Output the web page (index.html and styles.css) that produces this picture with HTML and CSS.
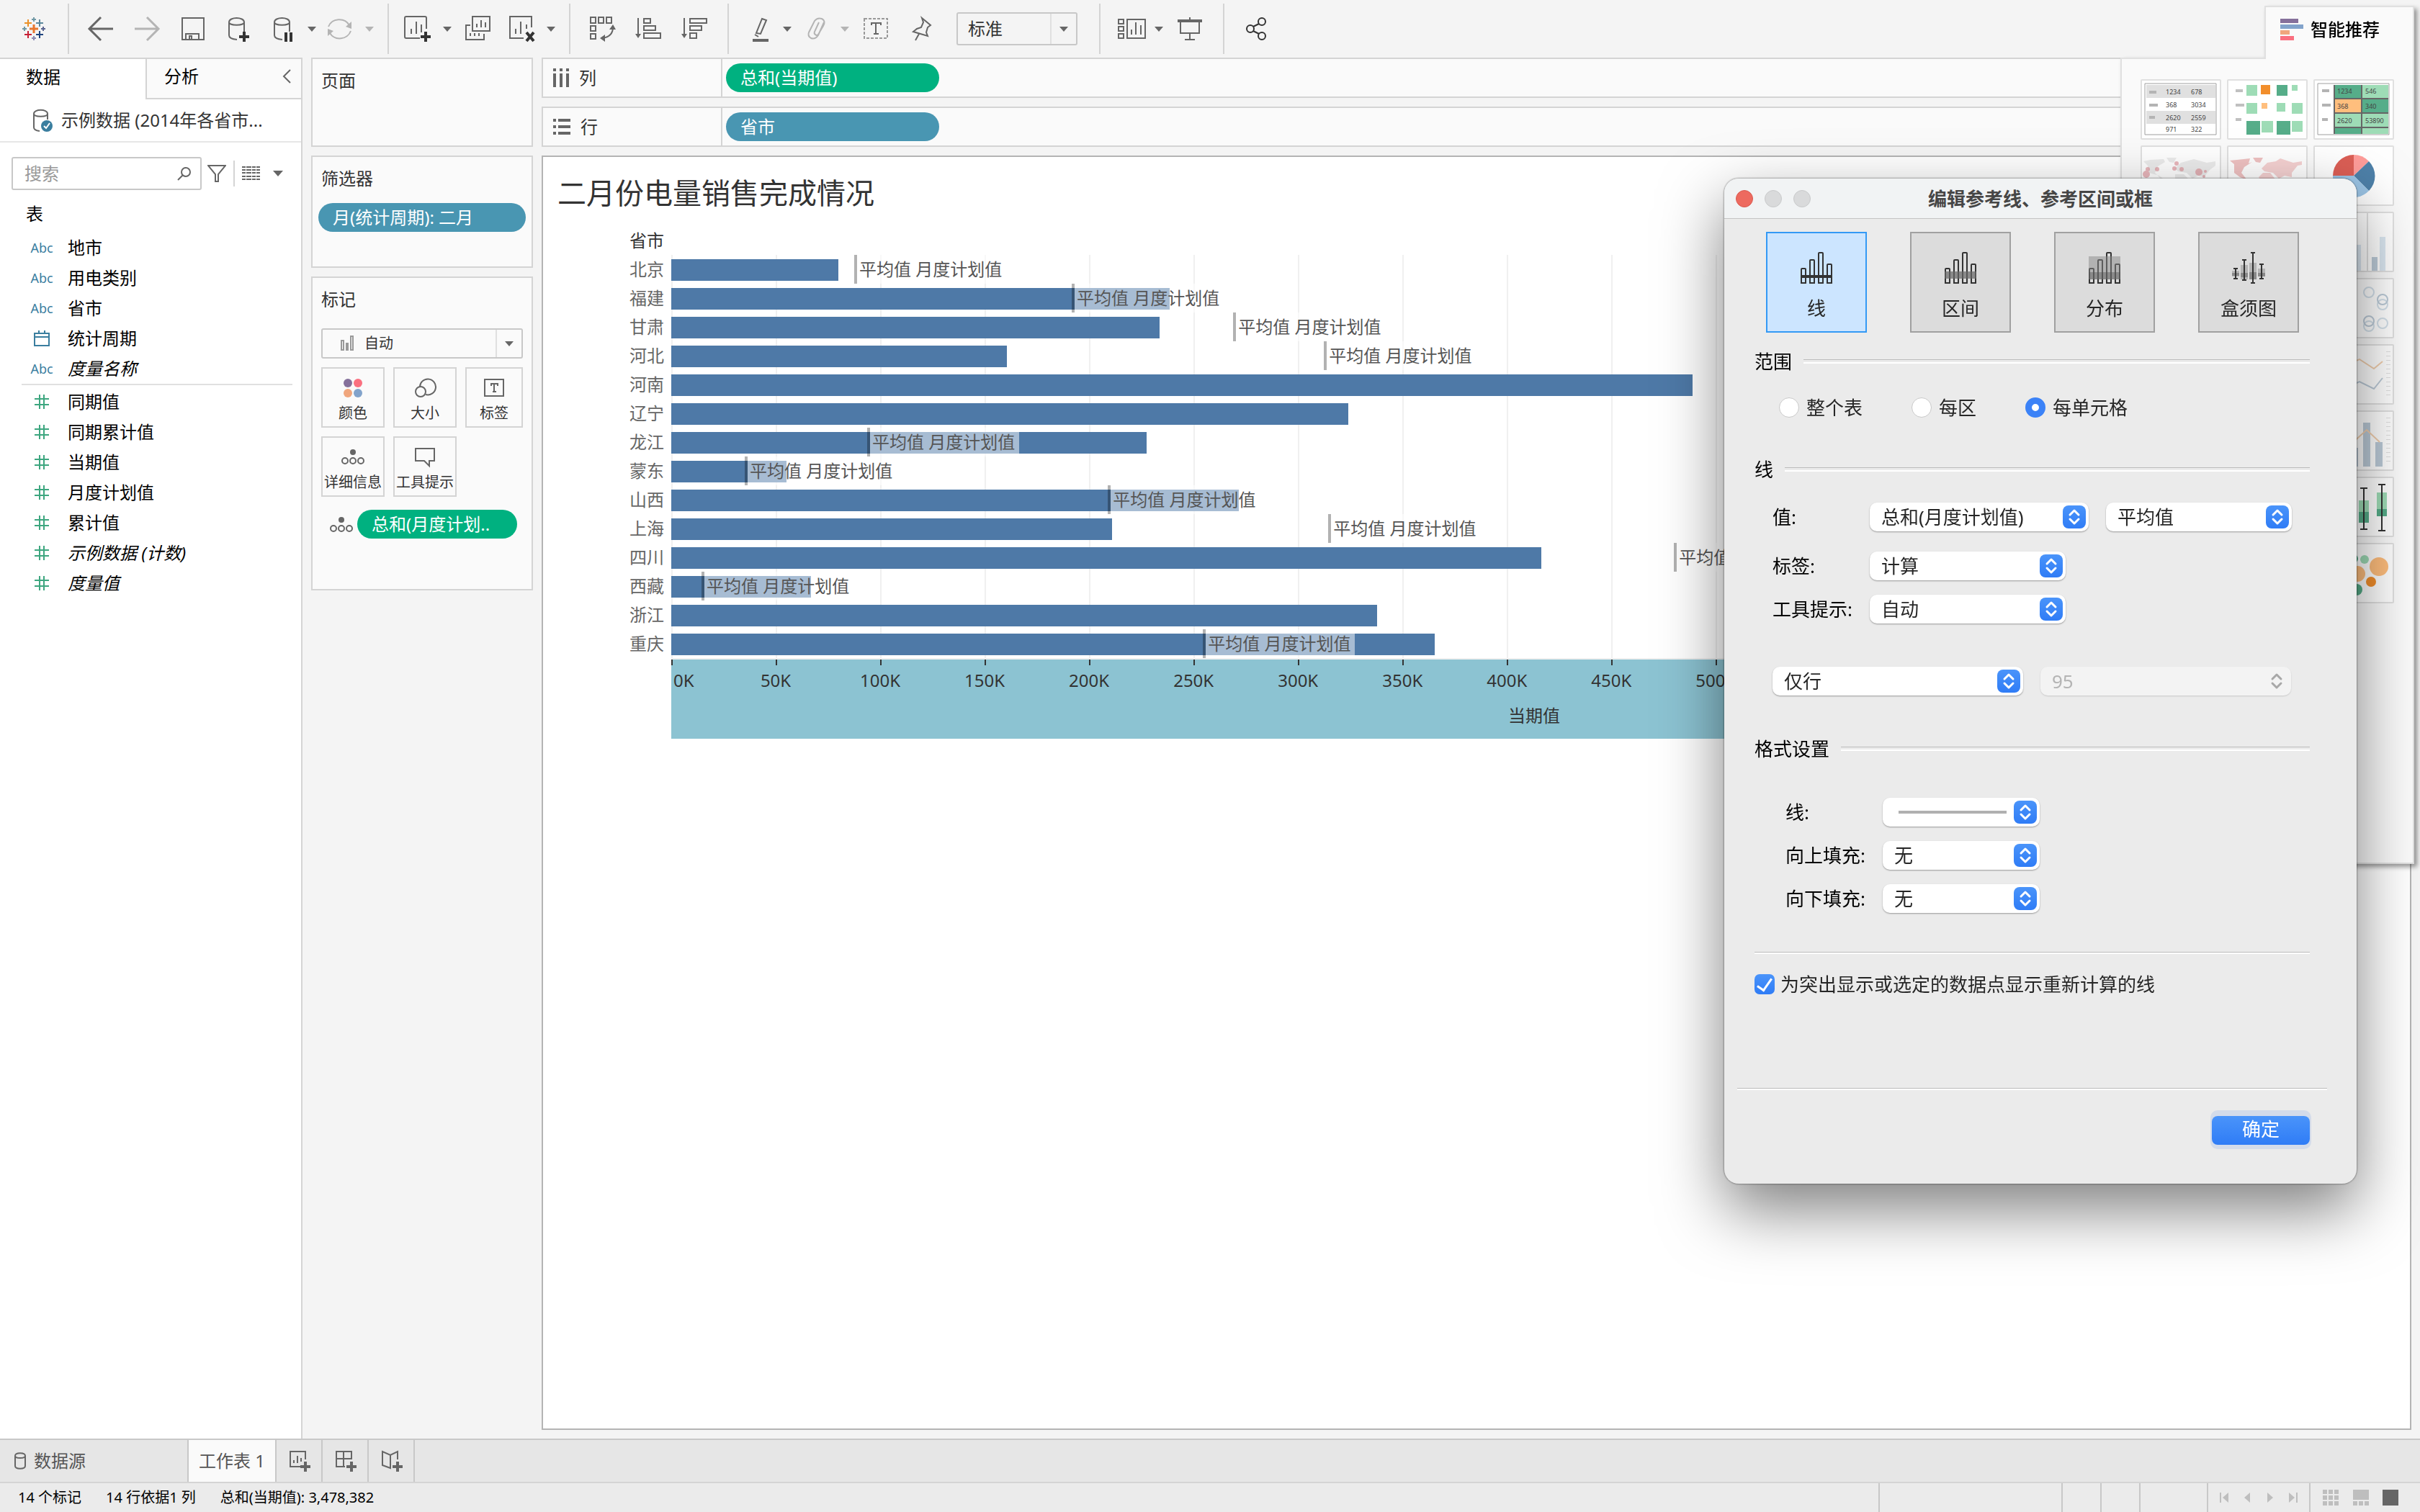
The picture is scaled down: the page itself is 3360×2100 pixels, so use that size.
FILE: index.html
```html
<!DOCTYPE html>
<html lang="zh-CN">
  <head>
    <meta charset="utf-8">
    <title>工作表 1</title>
    <link rel="stylesheet" href="styles.css">
  </head>
  <body>
    <!-- shared icons -->
    <svg class="sprite">
      <symbol id="caret" viewBox="0 0 14 8"><path d="M0 0H14L7 8Z" fill="currentColor"/></symbol>
      <symbol id="hash" viewBox="0 0 20 20"><path d="M7 0V20M13 0V20M0 6H20M0 14H20" fill="none" stroke="#3da67f" stroke-width="2"/></symbol>
      <symbol id="calendar" viewBox="0 0 22 22"><path d="M1 4H21V21H1ZM1 9H21M7 0V5M15 0V5" fill="none" stroke="#3a7e9f" stroke-width="2"/></symbol>
      <symbol id="detail" viewBox="0 0 32 22"><circle cx="16" cy="5" r="4" fill="#666"/><g fill="none" stroke="#666" stroke-width="2"><circle cx="5" cy="17" r="4"/><circle cx="16" cy="17" r="4"/><circle cx="27" cy="17" r="4"/></g></symbol>
      <symbol id="updown" viewBox="0 0 32 32"><path d="M10 13L16 7L22 13M10 19L16 25L22 19" fill="none" stroke="currentColor" stroke-width="3" stroke-linecap="round" stroke-linejoin="round"/></symbol>
      <symbol id="bars" viewBox="0 0 44 44"><path d="M1 24Q1 23 2 23H6Q7 23 7 24V43H1ZM13 12Q13 11 14 11H18Q19 11 19 12V43H13ZM25 2Q25 1 26 1H30Q31 1 31 2V43H25ZM37 18Q37 17 38 17H42Q43 17 43 18V43H37Z" fill="none" stroke="#333" stroke-width="2"/></symbol>
    </svg>

    <header class="toolbar">
      <div class="group logo">
        <svg width="40" height="40" viewBox="0 0 40 40" fill="none" stroke-width="2">
          <path d="M20 14V26M14 20H26" stroke="#e8762d" stroke-width="3"/>
          <path d="M20 4V10M17 7H23M7 17V23M4 20H10" stroke="#7199a6"/>
          <path d="M33 17V23M30 20H36" stroke="#5b6591"/>
          <path d="M20 30V36M17 33H23" stroke="#8b8bb4"/>
          <path d="M12 7V17M7 12H17" stroke="#eb9129"/>
          <path d="M28 7V17M23 12H33" stroke="#5b879b"/>
          <path d="M12 23V33M7 28H17" stroke="#c72035"/>
          <path d="M28 23V33M23 28H33" stroke="#1f447e"/>
        </svg>
      </div>
      <div class="group">
        <button class="tool" aria-label="后退"><svg width="40" height="40"><path d="M37 20H5M20 4L4 20L20 36" stroke-width="3"/></svg></button>
        <button class="tool off" aria-label="前进"><svg width="40" height="40"><path d="M3 20H35M20 4L36 20L20 36" stroke-width="3"/></svg></button>
        <button class="tool" aria-label="保存"><svg width="40" height="40"><path d="M5 5H35V35H5ZM10 35V27H28V35M15 35V30H18V35"/></svg></button>
        <button class="tool" aria-label="新建数据源"><svg width="40" height="40"><path d="M6 11V29Q6 34 17 35M27 11V24M6 11C6 3 27 3 27 11C27 16 6 16 6 11"/><path class="strong" d="M27 24V38M20 31H34"/></svg></button>
        <button class="tool-menu" aria-label="暂停自动更新"><svg width="40" height="40"><path d="M5 11V29Q5 34 16 35M26 11V24M5 11C5 3 26 3 26 11C26 16 5 16 5 11"/><path class="strong" d="M21 25V38M28 25V38"/></svg><svg class="caret"><use href="#caret"/></svg></button>
        <button class="tool-menu off" aria-label="刷新"><svg width="40" height="40"><path d="M0 17A16 15 0 0 1 29 15M31 23A16 15 0 0 1 2 26"/><path d="M32 10V20L24 17ZM-1 30V20L7 23Z" fill="#b4b4b4" stroke="none"/></svg><svg class="caret"><use href="#caret"/></svg></button>
      </div>
      <div class="group">
        <button class="tool-menu" aria-label="新建工作表"><svg width="40" height="40"><path d="M28 20V5Q28 3 26 3H0Q-2 3 -2 5V31Q-2 33 0 33H19M7 27V20M14 27V10M21 25V14"/><path class="strong" d="M27 24V38M20 31H34"/></svg><svg class="caret"><use href="#caret"/></svg></button>
        <button class="tool" aria-label="复制"><svg width="40" height="40"><path d="M12 3H36V23H12ZM18 18V13M24 18V8M30 18V11M9 15H3V35H28V27M9 30V26M15 30V26M21 30V26"/></svg></button>
        <button class="tool-menu" aria-label="清除工作表"><svg width="40" height="40"><path d="M30 18V3H0V33H19M8 27V20M15 27V10M23 20V14"/><path class="strong" d="M23 25L33 37M33 25L23 37"/></svg><svg class="caret"><use href="#caret"/></svg></button>
      </div>
      <div class="group">
        <button class="tool" aria-label="交换行和列"><svg width="40" height="40"><path d="M4 4H11V12H4ZM15 4H22V12H15ZM26 4H33V12H26ZM4 16H11V23H4ZM4 27H11V34H4ZM35 18Q35 31 20 33"/><path d="M30 21L39 21L35 14ZM24 28V38L17 33Z" class="solid"/></svg></button>
        <button class="tool" aria-label="升序排序"><svg width="40" height="40"><path d="M6 5V30M14 6H23V12H14ZM14 16H30V22H14ZM14 26H37V33H14Z"/><path d="M2 27H10L6 33Z" class="solid"/></svg></button>
        <button class="tool" aria-label="降序排序"><svg width="40" height="40"><path d="M6 5V30M14 6H37V12H14ZM14 16H30V22H14ZM14 26H23V33H14Z"/><path d="M2 27H10L6 33Z" class="solid"/></svg></button>
      </div>
      <div class="group">
        <button class="tool-menu" aria-label="突出显示"><svg width="40" height="40"><path d="M22 6L28 8L20 27L14 26ZM12 28L17 31"/><path d="M9 36H31" stroke-width="4"/></svg><svg class="caret"><use href="#caret"/></svg></button>
        <button class="tool-menu off" aria-label="组成员"><svg width="40" height="40"><path d="M28 11L20 29Q16 35 10 33Q5 30 7 25L15 9Q19 4 25 6Q31 9 27 16L20 28Q18 30 16 28Q14 27 15 24L21 11"/></svg><svg class="caret"><use href="#caret"/></svg></button>
        <button class="tool" aria-label="显示标记标签"><svg width="40" height="40"><path d="M4 6H36V33H4Z" stroke-dasharray="4 2" stroke="#999"/><path d="M14 15V12H27V15M20 12V27M17 27H24"/></svg></button>
        <button class="tool" aria-label="固定轴"><svg width="40" height="40"><path d="M20 5L32 15L28 18L26 25L28 30L8 24L13 20L19 18L22 11ZM16 27L11 36"/></svg></button>
        <span class="combo fit">
          <select aria-label="适合"><option>标准</option></select>
          <span class="combo-arrow"><svg class="caret"><use href="#caret"/></svg></span>
        </span>
      </div>
      <div class="group">
        <button class="tool-menu" aria-label="显示/隐藏卡"><svg width="40" height="40"><path d="M1 7H8V13H1ZM1 17H8V23H1ZM1 27H8V33H1ZM13 7H38V33H13ZM19 28V21M25 28V11M32 28V15"/></svg><svg class="caret"><use href="#caret"/></svg></button>
        <button class="tool" aria-label="演示模式"><svg width="40" height="40"><path d="M7 10V26H33V10M20 4V8M20 26V34M13 35H27"/><path d="M3 9H37" stroke-width="4"/></svg></button>
      </div>
      <div class="group last">
        <button class="tool" aria-label="共享"><svg width="40" height="40"><g stroke="#333"><circle cx="12" cy="20" r="5"/><circle cx="28" cy="10" r="5"/><circle cx="28" cy="30" r="5"/><path d="M16 17L24 13M16 23L24 27"/></g></svg></button>
      </div>
    </header>

    <main class="workspace">
      <aside class="data-pane">
        <div class="pane-tabs">
          <button class="pane-tab active">数据</button>
          <button class="pane-tab">分析<svg width="12" height="20"><path d="M11 1L2 10L11 19" fill="none" stroke="#666" stroke-width="2"/></svg></button>
        </div>
        <div class="source">
          <svg width="28" height="32"><path d="M2 7V26Q2 30 10 31M21 7V15M2 7C2 0 21 0 21 7C21 12 2 12 2 7" fill="none" stroke="#666" stroke-width="2"/><circle cx="20" cy="24" r="8" fill="#3a7e9f"/><path d="M16 24L19 27L24 20" fill="none" stroke="#fff" stroke-width="2"/></svg>
          <span>示例数据 (2014年各省市...</span>
        </div>
        <div class="search-row">
          <label class="search">
            <input type="text" placeholder="搜索" aria-label="搜索">
            <svg width="20" height="20"><circle cx="12" cy="8" r="6" fill="none" stroke="#666" stroke-width="2"/><path d="M8 12L1 19" stroke="#666" stroke-width="2"/></svg>
          </label>
          <button class="plain" aria-label="筛选"><svg width="26" height="26"><path d="M1 2H25L15 14V24L11 24V14Z" fill="none" stroke="#666" stroke-width="2"/></svg></button>
          <i></i>
          <button class="plain view-menu" aria-label="查看"><svg width="25" height="20"><path d="M0 1H25M0 5H25M0 9H25M0 14H25M0 18H25" stroke="#666" stroke-width="2" stroke-dasharray="5 1 7 1"/></svg><svg class="caret"><use href="#caret"/></svg></button>
        </div>
        <h2>表</h2>
        <ul class="fields">
          <li><b>Abc</b>地市</li>
          <li><b>Abc</b>用电类别</li>
          <li><b>Abc</b>省市</li>
          <li><b><svg width="22" height="22"><use href="#calendar"/></svg></b>统计周期</li>
          <li class="generated"><b>Abc</b>度量名称</li>
        </ul>
        <ul class="fields measures">
          <li><b><svg width="20" height="20"><use href="#hash"/></svg></b>同期值</li>
          <li><b><svg width="20" height="20"><use href="#hash"/></svg></b>同期累计值</li>
          <li><b><svg width="20" height="20"><use href="#hash"/></svg></b>当期值</li>
          <li><b><svg width="20" height="20"><use href="#hash"/></svg></b>月度计划值</li>
          <li><b><svg width="20" height="20"><use href="#hash"/></svg></b>累计值</li>
          <li class="generated"><b><svg width="20" height="20"><use href="#hash"/></svg></b>示例数据 (计数)</li>
          <li class="generated"><b><svg width="20" height="20"><use href="#hash"/></svg></b>度量值</li>
        </ul>
      </aside>

      <aside class="cards">
        <section class="card pages"><h2>页面</h2></section>
        <section class="card filters">
          <h2>筛选器</h2>
          <button class="pill blue">月(统计周期): 二月</button>
        </section>
        <section class="card marks">
          <h2>标记</h2>
          <span class="combo mark-type">
            <select aria-label="标记类型"><option>自动</option></select>
            <svg class="mark-icon" width="18" height="22"><path d="M1 7H4V20H1ZM8 11H10V20H8ZM14 1H17V20H14Z" fill="none" stroke="#999" stroke-width="2"/></svg>
            <span class="combo-arrow"><svg class="caret"><use href="#caret"/></svg></span>
          </span>
          <div class="mark-buttons">
            <button><svg width="32" height="32"><circle cx="9" cy="8" r="6" fill="#85709b"/><circle cx="23" cy="8" r="6" fill="#fa7080"/><circle cx="9" cy="22" r="6" fill="#f0a67d"/><circle cx="23" cy="22" r="6" fill="#82a3cb"/></svg>颜色</button>
            <button><svg width="32" height="32" fill="none" stroke="#666" stroke-width="2"><path d="M9 14A11 11 0 1 1 17 24"/><circle cx="10" cy="20" r="7"/></svg>大小</button>
            <button><svg width="32" height="32" fill="none" stroke="#666" stroke-width="2"><path d="M3 3H29V26H3ZM12 12V9H21V12M16 9V20M14 20H19"/></svg>标签</button>
            <button><svg width="32" height="32"><use href="#detail" width="32" height="22" y="3"/></svg>详细信息</button>
            <button><svg width="32" height="32" fill="none" stroke="#666" stroke-width="2"><path d="M3 3H29V20H22V27L15 20H3Z"/></svg>工具提示</button>
          </div>
          <div class="mark-pill">
            <svg width="32" height="22"><use href="#detail"/></svg>
            <button class="pill green">总和(月度计划..</button>
          </div>
        </section>
      </aside>

      <div class="sheet">
        <div class="shelf">
          <div class="shelf-name"><svg width="22" height="26"><path d="M2 0V4M11 0V4M20 0V4M2 7V26M11 7V26M20 7V26" stroke="#666" stroke-width="4"/></svg>列</div>
          <button class="pill green">总和(当期值)</button>
        </div>
        <div class="shelf">
          <div class="shelf-name"><svg width="24" height="22"><path d="M0 2H4M7 2H24M0 11H4M7 11H24M0 20H4M7 20H24" stroke="#666" stroke-width="4"/></svg>行</div>
          <button class="pill blue">省市</button>
        </div>
        <section class="view">
          <h1>二月份电量销售完成情况</h1>
          <div class="chart">
            <div class="chart-head">省市</div>
            <div class="chart-labels" id="labels"></div>
            <div class="plot" id="plot"></div>
            <div class="axis" id="axis"><span class="axis-title">当期值</span></div>
          </div>
        </section>
      </div>
    </main>

    <footer>
      <nav class="sheet-tabs">
        <button class="source-tab"><svg width="16" height="24"><path d="M1 5V19C1 24 15 24 15 19V5C15 0 1 0 1 5C1 9 15 9 15 5" fill="none" stroke="#666" stroke-width="2"/></svg>数据源</button>
        <button class="active">工作表 1</button>
        <button class="add" aria-label="新建工作表"><svg width="30" height="30" fill="none" stroke="#666" stroke-width="2"><path d="M22 13V2H1V23H15M6 18V14M11 18V8M16 16V11"/><path d="M22 16V30M15 23H29" stroke-width="4"/></svg></button>
        <button class="add" aria-label="新建仪表板"><svg width="30" height="30" fill="none" stroke="#666" stroke-width="2"><path d="M22 13V2H1V23H13M11 2V23M1 12H22"/><path d="M22 16V30M15 23H29" stroke-width="4"/></svg></button>
        <button class="add" aria-label="新建故事"><svg width="30" height="30" fill="none" stroke="#666" stroke-width="2"><path d="M22 13V2L12 7L1 2V21L12 25V7"/><path d="M22 16V30M15 23H29" stroke-width="4"/></svg></button>
      </nav>
      <div class="status">
        <span>14 个标记</span><span>14 行依据1 列</span><span>总和(当期值): 3,478,382</span>
        <i class="cell wide"></i><i class="cell"></i><i class="cell"></i><i class="cell mid"></i>
        <div class="cell pager">
          <button aria-label="第一个"><svg width="12" height="14"><path d="M0 0H2V14H0ZM12 0V14L4 7Z"/></svg></button>
          <button aria-label="上一个"><svg width="12" height="14"><path d="M10 0V14L2 7Z"/></svg></button>
          <button aria-label="下一个"><svg width="12" height="14"><path d="M2 0V14L10 7Z"/></svg></button>
          <button aria-label="最后一个"><svg width="12" height="14"><path d="M10 0H12V14H10ZM0 0V14L8 7Z"/></svg></button>
        </div>
        <div class="cell modes">
          <button aria-label="工作表排序程序"><svg width="22" height="22"><path d="M0 0H6V6H0ZM8 0H14V6H8ZM16 0H22V6H16ZM0 8H6V14H0ZM8 8H14V14H8ZM16 8H22V14H16ZM0 16H6V22H0ZM8 16H14V22H8ZM16 16H22V22H16Z"/></svg></button>
          <button aria-label="幻灯片"><svg width="22" height="22"><path d="M0 0H22V14H0ZM0 16H6V22H0ZM8 16H14V22H8ZM16 16H22V22H16Z"/></svg></button>
          <button aria-label="标签"><svg width="22" height="22"><path d="M0 0H22V22H0Z" fill="#666"/></svg></button>
        </div>
      </div>
    </footer>

    <!-- chart type picker -->
    <aside class="show-me">
      <button class="show-me-tab">
        <svg width="32" height="30"><path d="M0 0H25V6H0Z" fill="#85709b"/><path d="M0 8H32V14H0Z" fill="#82a3cb"/><path d="M0 16H13V22H0Z" fill="#f0a67d"/><path d="M0 24H19V30H0Z" fill="#fa7080"/></svg>
        智能推荐
      </button>
      <div class="show-me-body">
        <button aria-label="文本表"><svg width="108" height="80"><path d="M4 4H103V75H4Z" fill="#fff" stroke="#a0a0a0"/><path d="M6 6H102V24H6ZM6 42H102V60H6Z" fill="#e0e0e0"/><path d="M10 14H20V18H10ZM10 32H22V36H10ZM10 49H18V53H10Z" fill="#b4b4b4"/><g class="nums"><text x="33" y="19">1234</text><text x="68" y="19">678</text><text x="33" y="37">368</text><text x="68" y="37">3034</text><text x="33" y="55">2620</text><text x="68" y="55">2559</text><text x="33" y="71">971</text><text x="68" y="71">322</text></g></svg></button>
        <button aria-label="热图"><svg width="108" height="80"><path d="M10 12H20V16H10ZM10 32H22V36H10ZM10 52H18V56H10Z" fill="#c0c0c0"/><path d="M25 6H40V21H25ZM88 6H96V14H88ZM25 31H40V46H25ZM67 31H79V43H67ZM88 31H103V46H88ZM46 56H62V72H46ZM88 56H103V71H88Z" fill="#9edcb6"/><path d="M67 6H82V21H67ZM25 56H44V75H25ZM67 56H86V75H67Z" fill="#56ad89"/><path d="M45 6H58V19H45Z" fill="#f28e2b"/><path d="M46 31H54V39H46Z" fill="#ffbe7d"/></svg></button>
        <button aria-label="突出显示表"><svg width="108" height="80"><path d="M4 4H103V75H4Z" fill="#fff" stroke="#a0a0a0"/><path d="M10 12H20V16H10ZM10 32H22V36H10ZM10 52H18V56H10Z" fill="#b4b4b4"/><path d="M26 6H102V74H26Z" fill="#666"/><path d="M28 6H64V24H28ZM66 26H102V44H66ZM28 66H64V74H28Z" fill="#56ad89"/><path d="M66 6H102V24H66ZM28 46H64V64H28ZM66 46H102V64H66ZM66 66H102V74H66Z" fill="#9edcb6"/><path d="M28 26H64V44H28Z" fill="#ffbe7d"/><g class="nums"><text x="31" y="18">1234</text><text x="70" y="18">546</text><text x="31" y="39">368</text><text x="70" y="39">340</text><text x="31" y="59">2620</text><text x="70" y="59">53890</text></g></svg></button>
        <button aria-label="符号地图"><svg width="108" height="80"><path d="M2 20L12 18L30 17L32 21L22 27L18 36L24 42L30 56L34 48L24 40L10 36L8 26ZM34 15L48 15L44 22L38 21ZM46 30L54 22L72 17L90 22L102 20L102 26L94 32L86 42L78 40L70 44L62 36L50 34ZM46 38L58 38L66 46L56 60L46 48Z" fill="#ececec"/><g fill="#dd8a92" opacity=".6"><circle cx="6" cy="38" r="5"/><circle cx="8" cy="31" r="3"/><circle cx="21" cy="31" r="3"/><circle cx="48" cy="23" r="3"/><circle cx="45" cy="30" r="3"/><circle cx="55" cy="31" r="3"/><circle cx="79" cy="35" r="5"/><circle cx="88" cy="34" r="2"/><circle cx="86" cy="41" r="2"/></g></svg></button>
        <button aria-label="地图"><svg width="108" height="80"><path d="M2 19L12 18L30 16L28 23L33 21L22 28L18 36L26 46L16 42L8 36L8 24ZM34 15L48 15L44 22L38 21Z" fill="#f0c2c2"/><path d="M46 30L54 22L66 20L72 16L90 22L102 20L102 25L96 26L88 36L88 42L78 40L70 44L62 36L50 34ZM42 42L48 36L58 36L66 46L56 60L46 48Z" fill="#f6d2d2"/></svg></button>
        <button aria-label="饼图"><svg width="108" height="80"><path d="M54 40V11A29 29 0 0 1 75 20Z" fill="#ff9d9a"/><path d="M54 40L75 20A29 29 0 0 1 75 61Z" fill="#4e81a9"/><path d="M54 40L75 61A29 29 0 0 1 25 40Z" fill="#9cc5e6"/><path d="M54 40H25A29 29 0 0 1 54 11Z" fill="#dc5f56"/></svg></button>
        <button class="col3" aria-label="并排条"><svg width="108" height="80"><path d="M73 0V80" stroke="#e0e0e0" stroke-width="2"/><path d="M50 44H64V80H50ZM90 33H98V80H90Z" fill="#dbe7f1"/><path d="M79 61H87V80H79Z" fill="#bccbd8"/></svg></button>
        <button class="col3" aria-label="圆视图"><svg width="108" height="80" fill="none" stroke-width="2"><g stroke="#d3e0ea"><circle cx="75" cy="18" r="7"/><circle cx="94" cy="61" r="7"/><circle cx="94" cy="35" r="7"/><circle cx="75" cy="65" r="7"/></g><g stroke="#bccbd8"><circle cx="94" cy="28" r="7"/><circle cx="75" cy="58" r="7"/></g></svg></button>
        <button class="col3" aria-label="双线"><svg width="108" height="80" fill="none" stroke-width="2"><path d="M40 28L62 19L82 32L94 22" stroke="#f2cfae"/><path d="M40 60L62 50L82 60L94 45" stroke="#bccbd8"/><path d="M102 8V74" stroke="#e0e0e0" stroke-width="6" stroke-dasharray="1 5"/></svg></button>
        <button class="col3" aria-label="双组合"><svg width="108" height="80" fill="none" stroke-width="2"><path d="M50 50H60V76H50ZM67 15H77V76H67ZM84 42H94V76H84Z" fill="#bccbd8"/><path d="M50 45L72 25L90 42" stroke="#f2cfae"/><path d="M102 8V74" stroke="#e0e0e0" stroke-width="6" stroke-dasharray="1 5"/></svg></button>
        <button class="col3" aria-label="盒须图"><svg width="108" height="80"><path d="M61 31H75V47H61ZM86 20H100V43H86Z" fill="#9edcb6"/><path d="M61 47H75V62H61ZM86 43H100V53H86Z" fill="#56ad89"/><path d="M68 14V71M63 14H73M63 71H73M93 9V73M88 9H98M88 73H98" stroke="#333" stroke-width="2"/></svg></button>
        <button class="col3" aria-label="填充气泡图"><svg width="108" height="80"><circle cx="69" cy="21" r="6" fill="#9edcb6"/><g fill="#ffbe7d"><circle cx="89" cy="31" r="13"/><circle cx="59" cy="41" r="11"/></g><circle cx="78" cy="52" r="7" fill="#f28e2b"/><g fill="#56ad89"><circle cx="54" cy="20" r="6"/><circle cx="58" cy="63" r="8"/></g></svg></button>
      </div>
    </aside>

    <!-- reference line dialog -->
    <form class="dialog">
      <div class="titlebar"><span class="light red"></span><span class="light"></span><span class="light"></span><h2>编辑参考线、参考区间或框</h2></div>
      <div class="dialog-body">
        <div class="types">
          <button type="button" class="selected"><svg width="44" height="44"><use href="#bars"/><path d="M0 34H44" stroke="#333" stroke-width="4"/></svg>线</button>
          <button type="button"><svg width="44" height="44"><use href="#bars"/><path d="M0 27H44V37H0Z" fill="#666" opacity=".7"/></svg>区间</button>
          <button type="button"><svg width="44" height="44"><use href="#bars"/><path d="M0 6H44V28H0Z" fill="#888" opacity=".5"/><path d="M0 28H44V38H0Z" fill="#666" opacity=".7"/></svg>分布</button>
          <button type="button"><svg width="46" height="44"><path d="M0 26H10V34H0ZM12 18H22V38H12ZM24 15H34V38H24ZM36 23H46V34H36Z" fill="#b4b4b4"/><path d="M0 29H10V33H0ZM12 29H22V35H12ZM24 28H34V38H24ZM36 29H46V34H36Z" fill="#888"/><path d="M5 23V37M2 23H8M2 37H8M17 11V39M14 11H20M14 39H20M29 1V43M26 1H32M26 43H32M41 17V37M38 17H44M38 37H44" stroke="#333" stroke-width="2"/></svg>盒须图</button>
        </div>
        <h3>范围</h3>
        <div class="scope">
          <label class="scope-table"><input type="radio" name="scope">整个表</label>
          <label class="scope-pane"><input type="radio" name="scope">每区</label>
          <label><input type="radio" name="scope" checked>每单元格</label>
        </div>
        <h3>线</h3>
        <div class="row first">
          <label for="value">值:</label>
          <span class="popup w304"><select id="value"><option>总和(月度计划值)</option></select><svg><use href="#updown"/></svg></span>
          <span class="popup w258"><select aria-label="聚合"><option>平均值</option></select><svg><use href="#updown"/></svg></span>
        </div>
        <div class="row label-row">
          <label for="label">标签:</label>
          <span class="popup w272"><select id="label"><option>计算</option></select><svg><use href="#updown"/></svg></span>
        </div>
        <div class="row">
          <label for="tip">工具提示:</label>
          <span class="popup w272"><select id="tip"><option>自动</option></select><svg><use href="#updown"/></svg></span>
        </div>
        <div class="row interval">
          <span class="popup w348"><select aria-label="仅行"><option>仅行</option></select><svg><use href="#updown"/></svg></span>
          <span class="popup w348 disabled"><select aria-label="置信度" disabled><option>95</option></select><svg><use href="#updown"/></svg></span>
        </div>
        <h3>格式设置</h3>
        <div class="row format format-line">
          <label for="line">线:</label>
          <span class="popup w218"><select id="line"><option></option></select><i class="line-sample"></i><svg><use href="#updown"/></svg></span>
        </div>
        <div class="row format">
          <label for="above">向上填充:</label>
          <span class="popup w218"><select id="above"><option>无</option></select><svg><use href="#updown"/></svg></span>
        </div>
        <div class="row format">
          <label for="below">向下填充:</label>
          <span class="popup w218"><select id="below"><option>无</option></select><svg><use href="#updown"/></svg></span>
        </div>
        <hr>
        <label class="recalc"><input type="checkbox" checked>为突出显示或选定的数据点显示重新计算的线</label>
        <hr class="full">
        <button type="button" class="ok">确定</button>
      </div>
    </form>

    <script src="script.js"></script>
  </body>
</html>
```
FILE: styles.css
```css
*{
    box-sizing: border-box;
    margin: 0;
    padding: 0;
}
body{
    display: flex;
    flex-direction: column;
    height: 100vh;
    position: relative;
    overflow: hidden;
    background-color: #f4f4f4;
    color: #333;
    font: 24px/36px "Noto Sans", "Noto Sans CJK SC", sans-serif;
}
button, input, select{
    font: inherit;
    color: inherit;
    background: none;
    border: none;
    appearance: none;
}
h1, h2, h3{
    font-weight: normal;
}
h2{
    font-size: 24px;
}
ul{
    list-style: none;
}
svg{
    flex: none;
    display: block;
}
.sprite{
    position: absolute;
    width: 0;
    height: 0;
}
.caret{
    width: 12px;
    height: 7px;
    color: #666;
}

/* toolbar */
.toolbar{
    display: flex;
    align-items: center;
    height: 80px;
    flex: none;
}
.group{
    display: flex;
    align-items: center;
    height: 70px;
    padding: 0 14px 0 12px;
    border-right: 2px solid #d4d4d4;
}
.group.logo{
    width: 96px;
    padding: 0;
    justify-content: center;
}
.group.last{
    border: none;
}
.tool{
    width: 64px;
    padding: 0 12px;
}
.tool-menu{
    display: flex;
    align-items: center;
    gap: 11px;
    padding: 0 5px 0 12px;
}
.tool svg, .tool-menu svg{
    fill: none;
    stroke: #666;
    stroke-width: 2px;
    overflow: visible;
}
.tool svg path[stroke-width="3"]{
    stroke-width: 3px;
}
.tool-menu .caret{
    stroke: none;
}
.toolbar .strong{
    stroke: #333;
    stroke-width: 4px;
}
.toolbar .solid{
    fill: #666;
    stroke: none;
}
.toolbar .off svg{
    stroke: #b4b4b4;
}
.toolbar .off .caret{
    color: #b4b4b4;
    stroke: none;
}
.combo{
    display: grid;
    align-items: center;
    border: 2px solid #c8c8c8;
    border-radius: 3px;
}
.combo > *{
    grid-area: 1 / 1;
}
.combo select{
    width: 100%;
    height: 100%;
    padding-left: 14px;
}
.combo-arrow{
    justify-self: end;
    display: flex;
    align-items: center;
    justify-content: center;
    width: 36px;
    height: 100%;
    border-left: 2px solid #e0e0e0;
    pointer-events: none;
}
.fit{
    width: 168px;
    height: 46px;
    margin: 0 16px;
}

/* data pane */
.workspace{
    flex: 1;
    min-height: 0;
    display: grid;
    grid-template-columns: 420px 308px 1fr;
    column-gap: 12px;
}
.data-pane{
    background-color: #fff;
    border-top: 2px solid #d4d4d4;
    border-right: 2px solid #d4d4d4;
    color: #000;
}
.pane-tabs{
    display: flex;
}
.pane-tab{
    flex: 1;
    display: flex;
    align-items: center;
    justify-content: space-between;
    height: 56px;
    padding: 0 14px 6px 24px;
    background-color: #fafafa;
    border-left: 2px solid #d4d4d4;
    border-bottom: 2px solid #d4d4d4;
}
.pane-tab.active{
    flex: 0 0 202px;
    padding-left: 36px;
    background-color: #fff;
    border: none;
}
.source{
    display: flex;
    align-items: center;
    gap: 12px;
    height: 60px;
    padding-left: 45px;
    border-bottom: 2px solid #e6e6e6;
    color: #333;
}
.search-row{
    display: flex;
    align-items: center;
    gap: 8px;
    margin: 20px 0 15px 16px;
}
.search{
    display: flex;
    align-items: center;
    width: 264px;
    height: 46px;
    padding: 0 12px 0 16px;
    border: 2px solid #c8c8c8;
    border-radius: 3px;
}
.search input{
    flex: 1;
    min-width: 0;
}
.search input::placeholder{
    color: #999;
    opacity: 1;
}
.search-row i{
    width: 2px;
    height: 36px;
    margin: 0 2px 0 2px;
    background-color: #d4d4d4;
}
.view-menu{
    display: flex;
    align-items: center;
    gap: 18px;
}
.view-menu .caret{
    width: 14px;
    height: 8px;
}
.data-pane h2{
    padding-left: 36px;
    margin-bottom: 8px;
}
.fields li{
    display: flex;
    align-items: center;
    height: 42px;
    padding-left: 40px;
}
.fields b{
    display: flex;
    justify-content: center;
    width: 36px;
    margin-right: 18px;
    font-size: 18px;
    font-weight: normal;
    font-style: normal;
    color: #3a7e9f;
}
.fields .generated{
    font-style: italic;
}
.measures{
    position: relative;
    margin-top: 4px;
}
.measures::before{
    content: "";
    position: absolute;
    top: -4px;
    left: 30px;
    right: 12px;
    height: 2px;
    background-color: #e0e0e0;
}

/* cards */
.cards{
    display: flex;
    flex-direction: column;
    gap: 12px;
}
.card{
    padding: 12px 12px 0;
    background-color: #fafafa;
    border: 2px solid #d4d4d4;
}
.pages{
    height: 124px;
}
.filters{
    height: 156px;
    padding: 12px 8px 0;
}
.filters h2{
    padding-left: 4px;
    margin-bottom: 16px;
}
.marks{
    height: 436px;
}
.pill{
    display: block;
    height: 40px;
    padding: 0 20px;
    border-radius: 20px;
    color: #fff;
    line-height: 40px;
    text-align: left;
}
.filters .pill{
    width: 100%;
}
.blue{
    background-color: #4996b2;
}
.green{
    background-color: #00b180;
}
.mark-type{
    height: 42px;
    margin: 22px 0 12px;
    font-size: 20px;
}
.mark-type select{
    padding-left: 58px;
}
.mark-icon{
    margin-left: 25px;
    pointer-events: none;
}
.mark-buttons{
    display: grid;
    grid-template-columns: 88px 88px 80px;
    grid-auto-rows: 84px;
    gap: 12px;
}
.mark-buttons button{
    display: flex;
    flex-direction: column;
    align-items: center;
    justify-content: space-between;
    padding-top: 12px;
    border: 2px solid #d4d4d4;
    font-size: 20px;
    white-space: nowrap;
}
.mark-pill{
    display: flex;
    align-items: center;
    gap: 6px;
    margin: 18px 8px 0 12px;
}
.mark-pill .pill{
    flex: 1;
}

/* shelves and view */
.sheet{
    display: flex;
    flex-direction: column;
    gap: 12px;
    min-width: 0;
    padding: 0 12px 12px 0;
}
.shelf{
    display: flex;
    align-items: center;
    gap: 5px;
    height: 56px;
    background-color: #fafafa;
    border: 2px solid #d4d4d4;
}
.shelf-name{
    display: flex;
    align-items: center;
    gap: 14px;
    width: 249px;
    height: 100%;
    padding-left: 14px;
    border-right: 2px solid #d4d4d4;
}
.shelf .pill{
    width: 296px;
}
.view{
    flex: 1;
    padding: 20px 18px 0 20px;
    background-color: #fff;
    border: 2px solid #b4b4b4;
}
.view h1{
    font-size: 40px;
    line-height: 60px;
    margin-bottom: 16px;
}
.chart{
    display: grid;
    grid-template-columns: 148px 1fr;
    column-gap: 10px;
    line-height: 40px;
}
.chart-head{
    height: 40px;
    text-align: right;
}
.chart-labels{
    grid-row: 2;
    color: #666;
    text-align: right;
}
.plot{
    grid-area: 2 / 2;
    position: relative;
    border-bottom: 2px solid #f0f0f0;
}
.gridline{
    position: absolute;
    top: 0;
    bottom: 0;
    width: 2px;
    background-color: #f0f0f0;
}
.plot-row{
    position: relative;
    height: 40px;
    padding: 6px 0 4px;
}
.bar{
    height: 30px;
    background-color: #4e79a7;
}
.ref{
    position: absolute;
    top: 0;
    height: 40px;
    padding: 0 6px 0 3px;
    border-left: 4px solid rgba(0, 0, 0, 0.3);
    background-color: rgba(255, 255, 255, 0.5);
    background-clip: padding-box;
    color: #555;
    white-space: nowrap;
}
.axis{
    grid-area: 3 / 2;
    position: relative;
    height: 110px;
    padding-top: 58px;
    background-color: #8cc3d2;
    text-align: center;
}
.tick{
    position: absolute;
    top: 0;
    width: 2px;
    height: 8px;
    background-color: #333;
}
.tick span{
    position: absolute;
    top: 9px;
    left: 0;
    transform: translateX(-50%);
}
.tick.zero span{
    left: 3px;
    transform: none;
}

/* footer */
.sheet-tabs{
    display: flex;
    height: 62px;
    background-color: #e6e6e6;
    border-top: 2px solid #c8c8c8;
    border-bottom: 2px solid #d4d4d4;
    color: #555;
}
.sheet-tabs button{
    border-right: 2px solid #c8c8c8;
}
.sheet-tabs .source-tab{
    display: flex;
    align-items: center;
    gap: 11px;
    width: 262px;
    padding-left: 20px;
}
.sheet-tabs .active{
    width: 122px;
    background-color: #fafafa;
}
.sheet-tabs .add{
    width: 64px;
    padding-left: 18px;
}
.status{
    display: flex;
    align-items: center;
    gap: 34px;
    height: 40px;
    padding-left: 25px;
    background-color: #ebebeb;
    color: #000;
    font-size: 20px;
}
.cell{
    width: 54px;
    height: 40px;
    margin-left: -34px;
    border-left: 2px solid #c8c8c8;
}
.cell.wide{
    width: 254px;
    margin-left: auto;
}
.cell.mid{
    width: 94px;
}
.pager, .modes{
    display: flex;
    align-items: center;
    justify-content: space-between;
    fill: #bebebe;
}
.pager{
    width: 142px;
    padding: 0 16px;
}
.modes{
    width: 154px;
    padding: 0 30px 0 17px;
}

/* chart type picker */
.show-me{
    position: absolute;
    top: 8px;
    right: 8px;
    display: flex;
    flex-direction: column;
    width: 408px;
    filter: drop-shadow(4px 4px 3px rgba(0, 0, 0, 0.4));
}
.show-me-tab{
    position: relative;
    align-self: flex-end;
    display: flex;
    align-items: center;
    gap: 10px;
    width: 208px;
    height: 74px;
    padding: 0 0 10px 20px;
    margin-bottom: -2px;
    background-color: #fafafa;
    border: 2px solid #e0e0e0;
    border-bottom: none;
    color: #000;
    font-weight: 500;
}
.show-me-body{
    display: grid;
    grid-template-columns: repeat(3, 112px);
    grid-auto-rows: 84px;
    gap: 8px;
    height: 1120px;
    padding: 28px 26px;
    background-color: #fafafa;
    border: 2px solid #e0e0e0;
}
.show-me-body button{
    background-color: #fff;
    border: 2px solid #e0e0e0;
    border-radius: 2px;
}
.col3{
    grid-column: 3;
}
.nums{
    font-size: 9px;
    fill: #444;
}

/* dialog */
.dialog{
    position: absolute;
    top: 248px;
    right: 88px;
    width: 878px;
    overflow: hidden;
    border-radius: 20px;
    background-color: #ebebeb;
    box-shadow: 0 0 2px 1px rgba(0, 0, 0, 0.3), 0 36px 88px rgba(0, 0, 0, 0.5);
    color: #262626;
    font-size: 26px;
}
.titlebar{
    display: flex;
    align-items: center;
    gap: 16px;
    height: 56px;
    padding: 0 16px;
    background-color: #f1f3f4;
    border-bottom: 1px solid #c4c4c4;
}
.light{
    width: 24px;
    height: 24px;
    border: 1px solid #c8c9ca;
    border-radius: 50%;
    background-color: #d9dadb;
}
.light.red{
    background-color: #ed6a5f;
    border-color: #d9594f;
}
.titlebar h2{
    flex: 1;
    padding-right: 120px;
    color: #464646;
    font-size: 26px;
    font-weight: bold;
    line-height: 32px;
    text-align: center;
}
.dialog-body{
    padding: 18px 65px 54px 42px;
}
.types{
    display: flex;
    gap: 60px;
    padding-left: 16px;
    margin-bottom: 22px;
    margin-right: -20px;
}
.types button{
    display: flex;
    flex-direction: column;
    align-items: center;
    gap: 16px;
    width: 140px;
    height: 140px;
    padding-top: 26px;
    background-color: #dcdcdc;
    border: 2px solid #a0a0a0;
}
.types .selected{
    background-color: #cce5ff;
    border-color: #3399f5;
}
.dialog h3{
    display: flex;
    align-items: center;
    gap: 16px;
    color: #000;
    font-size: 26px;
}
.dialog h3::after{
    content: "";
    flex: 1;
    height: 3px;
    border-top: 1px solid #bbb;
    border-bottom: 2px solid #fff;
}
.scope{
    display: flex;
    height: 28px;
    margin: 32px 0 54px 34px;
}
.scope label{
    display: flex;
    align-items: center;
    gap: 10px;
}
.scope-table{
    width: 184px;
}
.scope-pane{
    width: 158px;
}
.scope input{
    width: 28px;
    height: 28px;
    border-radius: 50%;
    background-color: #fff;
    border: 1px solid #c8c8c8;
}
.scope input:checked{
    background-color: #fff;
    border: 9px solid #3b82f7;
}
.row{
    display: flex;
    align-items: center;
    gap: 24px;
    margin: 20px 0 0 25px;
    color: #262626;
}
.row label{
    width: 111px;
    color: #000;
    white-space: nowrap;
}
.row.first, .row.label-row{
    margin-top: 28px;
}
.row.interval{
    margin-top: 60px;
    margin-bottom: 56px;
}
.row.format{
    margin-left: 43px;
}
.row.format-line{
    margin-top: 50px;
}
.popup{
    display: grid;
    align-items: center;
    height: 40px;
    padding-right: 4px;
    border-radius: 10px;
    background-color: #fff;
    box-shadow: 0 1px 2px rgba(0, 0, 0, 0.35);
}
.popup > *{
    grid-area: 1 / 1;
}
.popup select{
    width: 100%;
    height: 40px;
    padding-left: 16px;
}
.popup svg{
    justify-self: end;
    width: 32px;
    height: 32px;
    border-radius: 8px;
    background: linear-gradient(#4a94fa, #2f7cf6);
    color: #fff;
    pointer-events: none;
}
.popup.disabled{
    background-color: #f3f3f3;
    color: #b4b4b4;
    box-shadow: 0 1px 2px rgba(0, 0, 0, 0.15);
}
.popup.disabled select{
    opacity: 1;
}
.popup.disabled svg{
    background: none;
    color: #a8a8a8;
}
.w218{
    width: 218px;
}
.w258{
    width: 258px;
}
.w272{
    width: 272px;
}
.w304{
    width: 304px;
}
.w348{
    width: 348px;
}
.line-sample{
    width: 150px;
    height: 4px;
    margin-left: 22px;
    background-color: #b0b0b0;
    pointer-events: none;
}
.dialog hr{
    height: 3px;
    margin: 54px 0 28px;
    border: none;
    border-top: 1px solid #bbb;
    border-bottom: 2px solid #fff;
}
.dialog hr.full{
    margin: 130px -24px 36px;
}
.recalc{
    display: flex;
    align-items: center;
    gap: 8px;
    height: 28px;
}
.recalc input{
    display: grid;
    place-items: center;
    width: 28px;
    height: 28px;
    border-radius: 7px;
    background: linear-gradient(#4a94fa, #2f7cf6);
}
.recalc input:checked::before{
    content: "";
    width: 9px;
    height: 18px;
    margin-bottom: 4px;
    border-right: 3px solid #fff;
    border-bottom: 3px solid #fff;
    transform: rotate(35deg);
}
.ok{
    display: block;
    width: 136px;
    height: 40px;
    padding-bottom: 4px;
    margin-left: auto;
    border-radius: 8px;
    background: linear-gradient(#4a94fa, #2f7cf6);
    box-shadow: 0 -6px 0 2px #d3dbea, 0 4px 0 2px #d3dbea;
    color: #fff;
    line-height: 36px;
}
```
FILE: script.js
```js
// values in thousands
const AXIS_MAX = 826;
const rows = [
  { name: "北京", value: 80, plan: 87.6 },
  { name: "福建", value: 238.6, plan: 191.7 },
  { name: "甘肃", value: 233.8, plan: 269 },
  { name: "河北", value: 160.7, plan: 312.4 },
  { name: "河南", value: 489 },
  { name: "辽宁", value: 324.1 },
  { name: "龙江", value: 227.6, plan: 93.8 },
  { name: "蒙东", value: 55.2, plan: 35.2 },
  { name: "山西", value: 271.7, plan: 209 },
  { name: "上海", value: 211, plan: 314.5 },
  { name: "四川", value: 416.6, plan: 480 },
  { name: "西藏", value: 66.9, plan: 14.5 },
  { name: "浙江", value: 337.9 },
  { name: "重庆", value: 365.5, plan: 254.5 }
];

const labels = document.getElementById("labels");
const plot = document.getElementById("plot");
const axis = document.getElementById("axis");

function add(parent, className, text) {
  const el = document.createElement("div");
  el.className = className;
  if (text) el.textContent = text;
  parent.appendChild(el);
  return el;
}

function percent(value) {
  return (value / AXIS_MAX) * 100 + "%";
}

for (let k = 0; k <= 800; k += 50) {
  add(plot, "gridline").style.left = percent(k);
  const tick = add(axis, k === 0 ? "tick zero" : "tick");
  tick.style.left = percent(k);
  const text = document.createElement("span");
  text.textContent = k + "K";
  tick.appendChild(text);
}

rows.forEach(function (row) {
  add(labels, "chart-label", row.name);
  const line = add(plot, "plot-row");
  add(line, "bar").style.width = percent(row.value);
  if (row.plan) {
    add(line, "ref", "平均值 月度计划值").style.left = percent(row.plan);
  }
});
```
